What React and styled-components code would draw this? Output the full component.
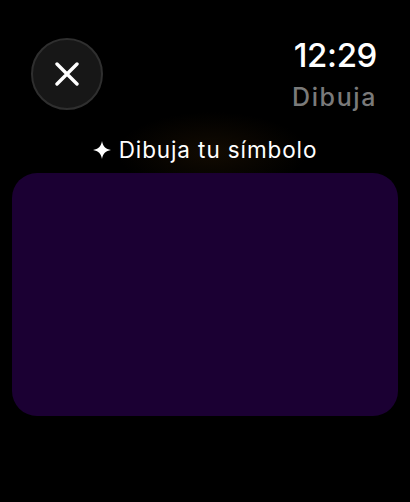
import React from "react";
import styled, { createGlobalStyle } from "styled-components";

const Global = createGlobalStyle`
  html, body {
    margin: 0;
    padding: 0;
    background: #000;
  }
  body {
    font-family: Inter, "Noto Sans", sans-serif;
    color: #fff;
  }
`;

const Page = styled.div`
  width: 410px;
  height: 502px;
  box-sizing: border-box;
  padding: 38px 12px 0 12px;
  display: flex;
  flex-direction: column;
  background: radial-gradient(ellipse 95px 40px at 212px 152px, rgba(40, 24, 4, 0.45), rgba(0, 0, 0, 0) 100%), #000;
`;

const Header = styled.div`
  display: flex;
  justify-content: space-between;
  align-items: flex-start;
  padding: 0 21px 0 19px;
`;

const CloseButton = styled.button`
  width: 72px;
  height: 72px;
  border-radius: 50%;
  box-sizing: border-box;
  border: 2px solid #2f2f2f;
  background: #171717;
  display: flex;
  align-items: center;
  justify-content: center;
  padding: 0;
`;

const Status = styled.div`
  display: flex;
  flex-direction: column;
  align-items: flex-end;
  padding-top: 1px;
`;

const Time = styled.div`
  font-size: 33px;
  line-height: 1;
  font-weight: 500;
  letter-spacing: -0.4px;
  color: #fff;
`;

const Title = styled.div`
  margin-top: 13px;
  font-size: 25px;
  line-height: 1;
  font-weight: 500;
  letter-spacing: 1.6px;
  color: #7a7a7a;
`;

const Prompt = styled.div`
  margin-top: 29px;
  display: flex;
  align-items: center;
  justify-content: center;
  gap: 8px;
  font-size: 22.5px;
  line-height: 22px;
  letter-spacing: 0.9px;
  color: #fff;
`;

const Canvas = styled.div`
  margin-top: 12px;
  height: 243px;
  border-radius: 25px;
  background: #1b0033;
`;

const XIcon = () => (
  <svg width="24" height="24" viewBox="0 0 24 24">
    <path d="M2 2 L22 22 M22 2 L2 22" stroke="#fff" strokeWidth="3.4" strokeLinecap="round" />
  </svg>
);

const Sparkle = () => (
  <svg width="18" height="18" viewBox="0 0 18 18">
    <path
      d="M9 0 C9.8 5.2 12.8 8.2 18 9 C12.8 9.8 9.8 12.8 9 18 C8.2 12.8 5.2 9.8 0 9 C5.2 8.2 8.2 5.2 9 0 Z"
      fill="#fff"
    />
  </svg>
);

export default function App() {
  return (
    <>
      <Global />
      <Page>
        <Header>
          <CloseButton aria-label="Cerrar">
            <XIcon />
          </CloseButton>
          <Status>
            <Time>12:29</Time>
            <Title>Dibuja</Title>
          </Status>
        </Header>
        <Prompt>
          <Sparkle />
          <span>Dibuja tu símbolo</span>
        </Prompt>
        <Canvas />
      </Page>
    </>
  );
}
